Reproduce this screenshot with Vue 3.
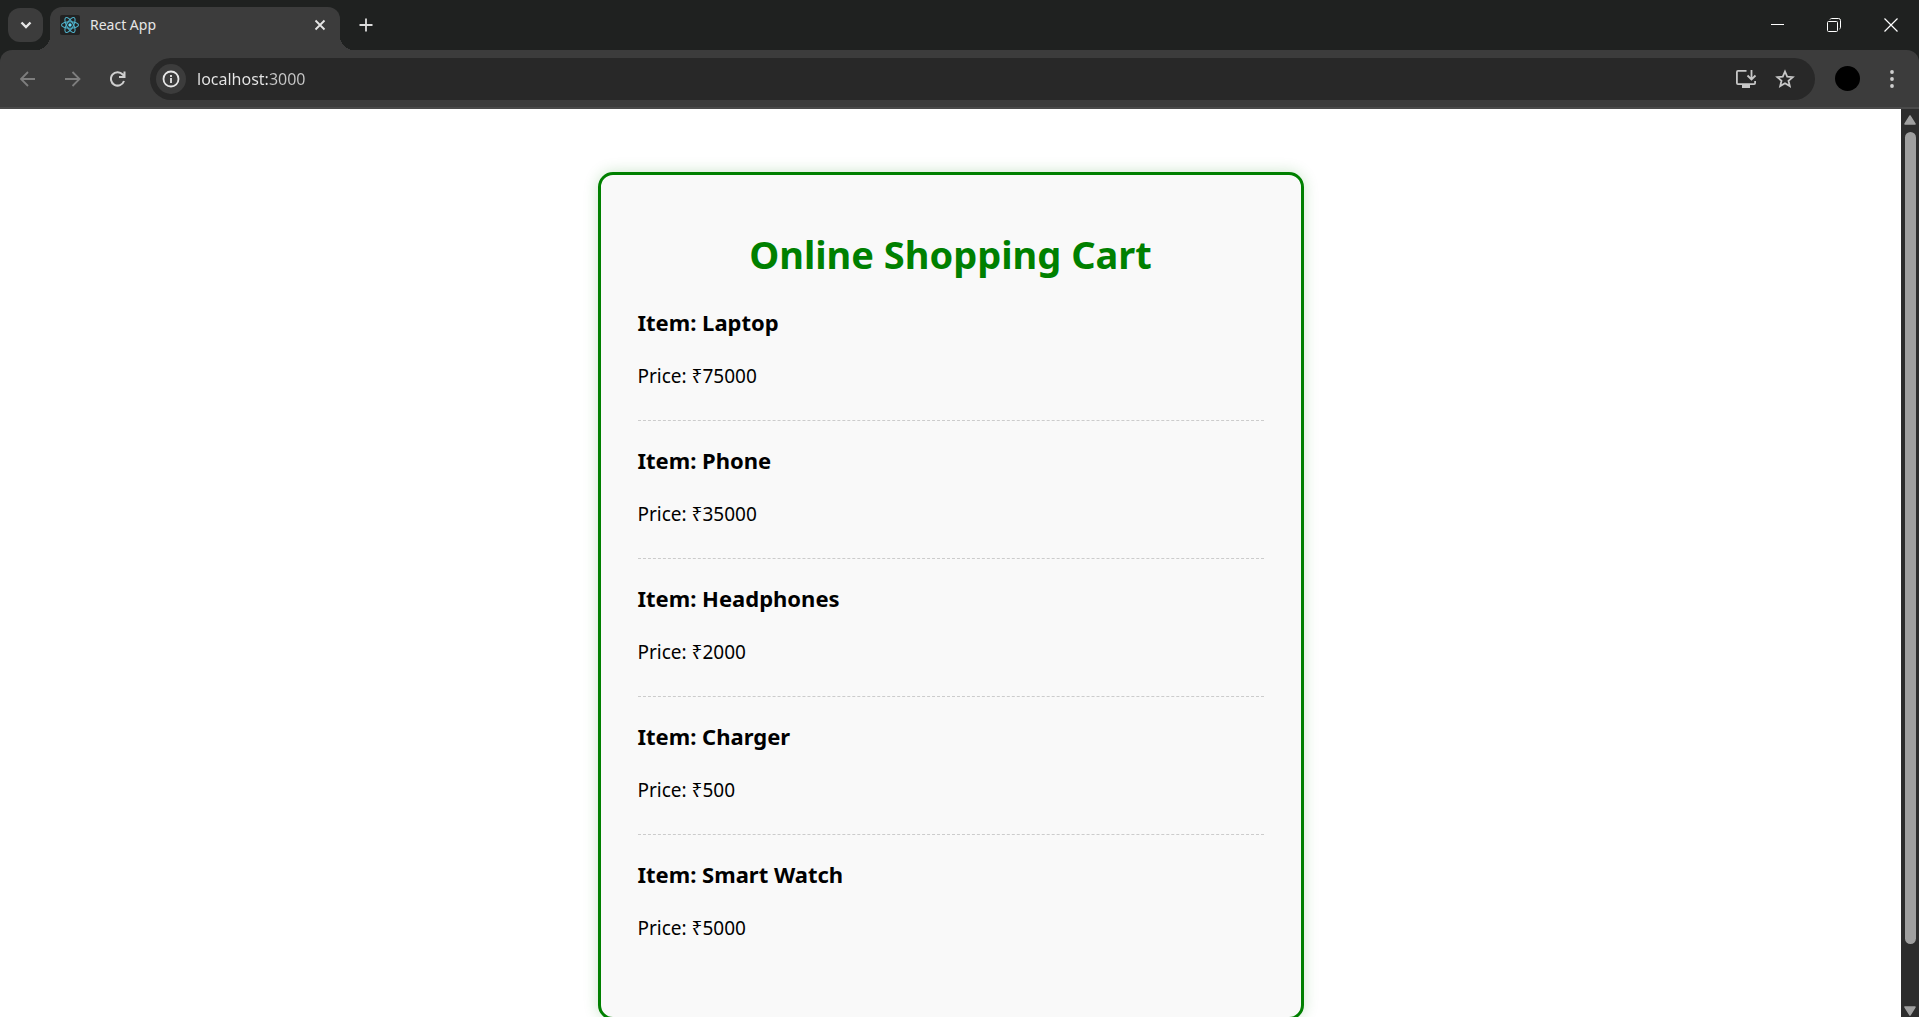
<script setup>
import { ref } from 'vue'

const address = ref('localhost:3000')

const items = [
  { name: 'Laptop', price: 75000 },
  { name: 'Phone', price: 35000 },
  { name: 'Headphones', price: 2000 },
  { name: 'Charger', price: 500 },
  { name: 'Smart Watch', price: 5000 },
]
</script>

<template>
  <div class="browser">
    <header class="tab-strip">
      <button class="tab-search" type="button" aria-label="Search tabs">
        <svg width="12" height="8" viewBox="0 0 12 8"><path d="M1.5 1.5 6 6l4.500-4.500" fill="none" stroke="#e6e6e6" stroke-width="2.400" /></svg>
      </button>
      <div class="tab">
        <svg class="favicon" width="20" height="20" viewBox="0 0 20 20">
          <rect width="20" height="20" rx="2" fill="#222" />
          <g fill="none" stroke="#4fb3cc" stroke-width="1.100">
            <ellipse cx="10" cy="10" rx="8.500" ry="3.300" />
            <ellipse cx="10" cy="10" rx="8.500" ry="3.300" transform="rotate(60 10 10)" />
            <ellipse cx="10" cy="10" rx="8.500" ry="3.300" transform="rotate(120 10 10)" />
          </g>
          <circle cx="10" cy="10" r="1.700" fill="#61dafb" />
        </svg>
        <span class="tab-title">React App</span>
        <button class="icon-button" type="button" aria-label="Close tab">
          <svg width="12" height="12" viewBox="0 0 12 12"><path d="M1.500 1.500l9 9M10.500 1.500l-9 9" stroke="#e6e6e6" stroke-width="1.800" /></svg>
        </button>
      </div>
      <button class="icon-button new-tab" type="button" aria-label="New tab">
        <svg width="14" height="14" viewBox="0 0 14 14"><path d="M7 0.500v13M0.500 7h13" stroke="#dcdcdc" stroke-width="1.800" /></svg>
      </button>
      <div class="window-controls">
        <button class="icon-button" type="button" aria-label="Minimize">
          <svg width="14" height="14" viewBox="0 0 14 14"><path d="M1 6.500h13" stroke="#fff" /></svg>
        </button>
        <button class="icon-button" type="button" aria-label="Restore">
          <svg width="14" height="14" viewBox="0 0 14 14" fill="none" stroke="#fff">
            <rect x="0.500" y="3.500" width="10" height="10" rx="1" />
            <path d="M3 1.500Q3.500 0.500 4.500 0.500H11.500Q13.500 0.500 13.500 2.500V9.500Q13.500 10.500 12.500 11" />
          </svg>
        </button>
        <button class="icon-button" type="button" aria-label="Close">
          <svg width="14" height="14" viewBox="0 0 14 14"><path d="M0.500 0.500l13 13M13.500 0.500l-13 13" stroke="#fff" stroke-width="1.200" /></svg>
        </button>
      </div>
    </header>

    <nav class="toolbar" aria-label="Browser toolbar">
      <button class="icon-button" type="button" aria-label="Back">
        <svg width="16" height="16" viewBox="0 0 16 16"><path d="M15 8H1.500M8 1 1 8l7 7" fill="none" stroke="#7e7e7e" stroke-width="1.800" /></svg>
      </button>
      <button class="icon-button" type="button" aria-label="Forward">
        <svg width="16" height="16" viewBox="0 0 16 16"><path d="M0 8h14M7.500 1l7 7-7 7" fill="none" stroke="#7e7e7e" stroke-width="1.800" /></svg>
      </button>
      <button class="icon-button" type="button" aria-label="Reload">
        <svg width="16" height="16" viewBox="0 0 16 16"><path d="M14 10A6.700 6.700 0 1 1 12.700 3.500L14.200 5.500M14.500 0.500V6H9" fill="none" stroke="#cfcfcf" stroke-width="2" /></svg>
      </button>
      <div class="address-bar">
        <button class="site-info" type="button" aria-label="Site information">
          <svg width="18" height="18" viewBox="0 0 18 18">
            <circle cx="9" cy="9" r="7.500" fill="none" stroke="#e6e6e6" stroke-width="1.800" />
            <path d="M9 8v5M9 5v2" stroke="#e6e6e6" stroke-width="1.800" />
          </svg>
        </button>
        <input v-model="address" class="address" type="text" aria-label="Address" spellcheck="false" />
        <button class="icon-button" type="button" aria-label="Install app">
          <svg width="22" height="20" viewBox="0 0 22 20">
            <path d="M11.500 1.900H3Q1.900 1.900 1.900 3V14Q1.900 15.200 3 15.200H19Q20.100 15.200 20.100 14V12" fill="none" stroke="#c7c7c7" stroke-width="1.800" />
            <path d="M7 15.500h8v3.500H7z" fill="#c7c7c7" />
            <path d="M16.500 1v9M12.500 6.500l4 4 4-4" fill="none" stroke="#c7c7c7" stroke-width="1.800" />
          </svg>
        </button>
        <button class="icon-button" type="button" aria-label="Bookmark">
          <svg width="20" height="20" viewBox="0 0 20 20"><path d="M10 2.500 12.200 7.600 17.700 8.100 13.500 11.700 14.800 17.100 10 14.200 5.200 17.100 6.500 11.700 2.300 8.100 7.800 7.600Z" fill="none" stroke="#c7c7c7" stroke-width="1.800" /></svg>
        </button>
      </div>
      <button class="profile" type="button" aria-label="Profile"></button>
      <button class="icon-button menu" type="button" aria-label="Menu">
        <svg width="4" height="18" viewBox="0 0 4 18" fill="#cfcfcf"><circle cx="2" cy="2" r="1.900" /><circle cx="2" cy="9" r="1.900" /><circle cx="2" cy="16" r="1.900" /></svg>
      </button>
    </nav>

    <div class="viewport">
      <main class="page">
        <section class="cart">
          <h1>Online Shopping Cart</h1>
          <article v-for="item in items" :key="item.name" class="item">
            <h3>Item: {{ item.name }}</h3>
            <p>Price: ₹{{ item.price }}</p>
          </article>
        </section>
      </main>
      <div class="scrollbar" aria-hidden="true">
        <svg width="12" height="10" viewBox="0 0 12 10"><path d="M6 1 11 9H1z" fill="#9f9f9f" stroke="#9f9f9f" stroke-width="1.500" stroke-linejoin="round" /></svg>
        <div class="thumb"></div>
        <svg width="12" height="10" viewBox="0 0 12 10"><path d="M6 9 1 1h10z" fill="#9f9f9f" stroke="#9f9f9f" stroke-width="1.500" stroke-linejoin="round" /></svg>
      </div>
    </div>
  </div>
</template>

<style>
body {
  margin: 0;
  overflow: hidden;
}
</style>

<style scoped>
.browser {
  display: flex;
  flex-direction: column;
  height: 100vh;
  overflow: hidden;
  background: #fff;
  color: #000;
  font-family: "Segoe UI", "Noto Sans", "Open Sans", sans-serif;
}

button {
  padding: 0;
  border: 0;
  background: none;
}

svg {
  display: block;
}

.icon-button,
.tab-search,
.site-info {
  display: flex;
  flex: none;
  align-items: center;
  justify-content: center;
}

.tab-strip {
  position: relative;
  z-index: 1;
  display: flex;
  flex: none;
  align-items: center;
  height: 50px;
  background: #1f2120;
}

.tab-search {
  width: 35px;
  height: 34px;
  margin-left: 8px;
  border-radius: 12px;
  background: #3c3c3c;
}

.tab {
  position: relative;
  display: flex;
  align-items: center;
  align-self: flex-end;
  gap: 10px;
  box-sizing: border-box;
  width: 290px;
  height: 43px;
  margin-left: 7px;
  padding: 0 14px 7px 10px;
  border-radius: 12px 12px 0 0;
  background: #3c3c3c;
}

.tab::before,
.tab::after {
  position: absolute;
  bottom: 0;
  width: 14px;
  height: 14px;
  content: "";
}

.tab::before {
  right: 100%;
  background: radial-gradient(circle at 0 0, transparent 14px, #3c3c3c 14px);
}

.tab::after {
  left: 100%;
  background: radial-gradient(circle at 100% 0, transparent 14px, #3c3c3c 14px);
}

.tab-title {
  flex: 1;
  color: #e6e6e6;
  font-size: 14px;
  line-height: 20px;
}

.new-tab {
  margin-left: 19px;
}

.window-controls {
  display: flex;
  gap: 43px;
  margin-left: auto;
  padding-right: 21px;
}

.toolbar {
  display: flex;
  flex: none;
  align-items: center;
  box-sizing: border-box;
  height: 59px;
  padding: 0 25px 0 20px;
  border-bottom: 2px solid #4a4a4a;
  border-radius: 12px 12px 0 0;
  background: #3c3c3c;
  box-shadow: 0 -12px 0 #1f2120;
}

.toolbar .icon-button + .icon-button {
  margin-left: 29px;
}

.address-bar {
  display: flex;
  flex: 1;
  align-items: center;
  box-sizing: border-box;
  height: 42px;
  margin-left: 24px;
  padding: 0 20px 0 6px;
  border-radius: 21px;
  background: #282828;
}

.site-info {
  width: 30px;
  height: 30px;
  border-radius: 50%;
  background: #3c3c3c;
}

.address {
  flex: 1;
  min-width: 0;
  margin-left: 11px;
  padding: 0;
  border: 0;
  outline: 0;
  background: linear-gradient(90deg, #e8e8e8 71px, #c7c7c7 71px);
  background-clip: text;
  color: transparent;
  font: inherit;
  font-size: 16px;
  line-height: 26px;
}

.toolbar .address-bar .icon-button + .icon-button {
  margin-left: 18px;
}

.profile {
  width: 25px;
  height: 25px;
  margin-left: 20px;
  border-radius: 50%;
  background: #000;
}

.menu {
  margin-left: 30px;
}

.viewport {
  display: flex;
  flex: 1;
  min-height: 0;
}

.page {
  flex: 1;
  overflow: hidden;
}

.cart {
  box-sizing: border-box;
  max-width: 706px;
  margin: 63px auto;
  padding: 52px 37px 45px;
  border: 3px solid green;
  border-radius: 15px;
  background: #f9f9f9;
  box-shadow: 0 0 15px rgba(0, 128, 0, 0.2);
}

.cart h1 {
  margin: 0 0 2px;
  color: green;
  font-size: 38px;
  line-height: 54px;
  text-align: center;
}

.item {
  display: flex;
  flex-direction: column;
  gap: 26px;
  padding: 24px 0 31px;
  border-bottom: 1px dashed #ccc;
}

.item:last-child {
  border-bottom: 0;
}

.item h3 {
  margin: 0;
  font-size: 22px;
  line-height: 30px;
}

.item p {
  margin: 0;
  font-size: 19px;
  line-height: 26px;
}

.scrollbar {
  display: flex;
  flex: none;
  flex-direction: column;
  align-items: center;
  box-sizing: border-box;
  width: 18px;
  padding: 6px 0 1px;
  background: #2c2c2c;
}

.thumb {
  flex: 1;
  width: 11px;
  margin: 7px 0 62px;
  border-radius: 6px;
  background: #9f9f9f;
}
</style>
